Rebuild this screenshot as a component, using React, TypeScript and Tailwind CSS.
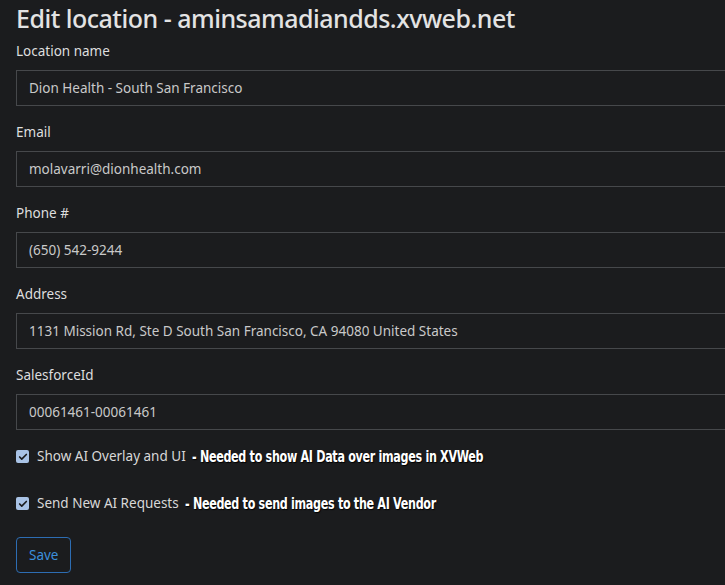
import { Check } from "lucide-react";

const fields = [
  { label: "Location name", value: "Dion Health - South San Francisco" },
  { label: "Email", value: "molavarri@dionhealth.com" },
  { label: "Phone #", value: "(650) 542-9244" },
  { label: "Address", value: "1131 Mission Rd, Ste D South San Francisco, CA 94080 United States" },
  { label: "SalesforceId", value: "00061461-00061461" },
];

function Checkbox() {
  return (
    <span className="flex items-center justify-center w-[13px] h-[13px] rounded-[2px] bg-[#a9c3e6]">
      <Check className="w-[10px] h-[10px] text-[#1b1c1e]" strokeWidth={4} />
    </span>
  );
}

function Note({ children }: { children: string }) {
  return (
    <span className="inline-block -ml-[2px] origin-left scale-x-[0.775] font-['DejaVu_Sans_Condensed','DejaVu_Sans',sans-serif] [font-stretch:condensed] font-bold text-white text-[16px] tracking-[-0.4px] [text-shadow:1px_1px_1px_#000]">
      {children}
    </span>
  );
}

export default function App() {
  return (
    <div className="w-[725px] h-[585px] overflow-hidden bg-[#1b1c1e] font-['Noto_Sans',sans-serif] text-[#dedede]">
      <div className="pl-4 w-[760px]">
        <h2 className="text-[25px] leading-[31px] font-medium tracking-[-0.5px] text-[#e3e3e3] pt-[3px] mb-[7px]">
          Edit location - aminsamadiandds.xvweb.net
        </h2>
        {fields.map((f) => (
          <div key={f.label} className="mb-4">
            <label className="block text-[13.5px] leading-[21px] mb-2">{f.label}</label>
            <div className="h-[36px] border border-[#46484b] bg-[#1b1c1e] flex items-center px-3 text-[13.5px] text-[#c9c9c9]">
              {f.value}
            </div>
          </div>
        ))}
        <div className="flex items-center gap-2 h-[21px] mt-[4px]">
          <Checkbox />
          <span className="text-[13.5px] text-[#d8d8d8]">Show AI Overlay and UI</span>
          <Note>- Needed to show AI Data over images in XVWeb</Note>
        </div>
        <div className="flex items-center gap-2 h-[21px] mt-[26px]">
          <Checkbox />
          <span className="text-[13.5px] text-[#d8d8d8]">Send New AI Requests</span>
          <Note>- Needed to send images to the AI Vendor</Note>
        </div>
        <button className="mt-[23px] h-[36px] px-3 border border-[#2d6db3] rounded-[4px] text-[#3b8fdb] text-[13.5px]">
          Save
        </button>
      </div>
    </div>
  );
}
